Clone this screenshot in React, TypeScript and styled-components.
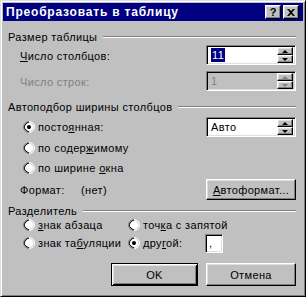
import {FC, ReactNode} from "react";
import styled, {createGlobalStyle, css} from "styled-components";

const Global = createGlobalStyle`
  html, body {
    margin: 0;
    padding: 0;
    background: #c0c0c0;
  }
  * {
    box-sizing: border-box;
  }
`

const raised = css`
  border: 1px solid;
  border-color: #fff #000 #000 #fff;
  box-shadow: inset -1px -1px #808080, inset 1px 1px #dfdfdf;
`

const sunken = css`
  border: 1px solid;
  border-color: #808080 #fff #fff #808080;
  box-shadow: inset 1px 1px #000, inset -1px -1px #dfdfdf;
`

const Window = styled.div`
  width: 306px;
  height: 297px;
  background: #c0c0c0;
  border: 1px solid;
  border-color: #dfdfdf #000 #000 #dfdfdf;
  box-shadow: inset 1px 1px #fff, inset -1px -1px #808080;
  padding: 2px;
  display: flex;
  flex-direction: column;
  font-family: "Liberation Sans", Arial, sans-serif;
  font-size: 11px;
  letter-spacing: 0.35px;
  color: #000;
`

const TitleBar = styled.div`
  height: 18px;
  background: #000080;
  display: flex;
  align-items: center;
  padding: 0 4px 0 3px;
`

const TitleText = styled.div`
  flex: 1;
  color: #fff;
  font-weight: bold;
  font-size: 12px;
  letter-spacing: 0.8px;
`

const CaptionButton = styled.div`
  ${raised};
  width: 16px;
  height: 14px;
  margin-left: 2px;
  background: #c0c0c0;
  display: flex;
  align-items: center;
  justify-content: center;
  font-weight: bold;
  font-size: 11px;
  letter-spacing: 0;
`

const Body = styled.div`
  padding: 9px 7px 0 5px;
  display: flex;
  flex-direction: column;
`

const GroupHead = styled.div<{ $h?: number; $mt?: number }>`
  display: flex;
  align-items: center;
  gap: 6px;
  height: ${({$h}) => $h ?? 14}px;
  margin-top: ${({$mt}) => $mt ?? 0}px;
`

const Rule = styled.div`
  flex: 1;
  border-top: 1px solid #808080;
  border-bottom: 1px solid #fff;
`

const Row = styled.div<{ $h: number; $mt?: number }>`
  display: flex;
  align-items: center;
  height: ${({$h}) => $h}px;
  margin-top: ${({$mt}) => $mt ?? 0}px;
  padding-left: 12px;
`

const Label = styled.span<{ $disabled?: boolean; $w?: number }>`
  ${({$w}) => $w ? `width: ${$w}px;` : "flex: 1;"}
  padding-top: 1px;
  color: ${({$disabled}) => $disabled ? "#808080" : "#000"};
`

const Field = styled.div<{ $disabled?: boolean }>`
  ${sunken};
  width: 90px;
  height: 20px;
  padding: 2px;
  display: flex;
  align-items: center;
  background: ${({$disabled}) => $disabled ? "#c0c0c0" : "#fff"};
  color: ${({$disabled}) => $disabled ? "#808080" : "#000"};
`

const FieldText = styled.div`
  flex: 1;
  padding-left: 2px;
`

const Selected = styled.span`
  background: #000080;
  color: #fff;
  padding: 1px 1px;
`

const SpinCol = styled.div`
  width: 16px;
  height: 16px;
  display: flex;
  flex-direction: column;
`

const SpinButton = styled.div`
  ${raised};
  flex: 1;
  background: #c0c0c0;
  display: flex;
  align-items: center;
  justify-content: center;
`

const Arrow = styled.div<{ $down?: boolean; $disabled?: boolean }>`
  width: 0;
  height: 0;
  border-left: 3px solid transparent;
  border-right: 3px solid transparent;
  ${({$down, $disabled}) => $down
    ? `border-top: 3px solid ${$disabled ? "#808080" : "#000"};`
    : `border-bottom: 3px solid ${$disabled ? "#808080" : "#000"};`}
`

const RadioLine = styled.label`
  display: flex;
  align-items: center;
  gap: 3px;
  white-space: nowrap;
`

const RadioOuter = styled.span`
  width: 12px;
  height: 12px;
  flex: none;
  border-radius: 50%;
  border: 1px solid;
  border-color: #808080 #fff #fff #808080;
  transform: rotate(-45deg);
  display: flex;
`

const RadioInner = styled.span`
  flex: 1;
  border-radius: 50%;
  border: 1px solid;
  border-color: #000 #dfdfdf #dfdfdf #000;
  background: #fff;
  display: flex;
  align-items: center;
  justify-content: center;
`

const Dot = styled.span`
  width: 4px;
  height: 4px;
  border-radius: 50%;
  background: #000;
`

const RadioSlot = styled.div`
  padding-left: 3px;
  flex: 1;
`

const Button = styled.div<{ $w: number; $h: number; $default?: boolean }>`
  width: ${({$w}) => $w}px;
  height: ${({$h}) => $h}px;
  background: #c0c0c0;
  display: flex;
  align-items: center;
  justify-content: center;
  ${({$default}) => $default
    ? css`
      border: 1px solid #000;
      box-shadow: inset 1px 1px #fff, inset -1px -1px #000, inset 2px 2px #dfdfdf, inset -2px -2px #808080;
    `
    : raised}
`

const SepGrid = styled.div`
  display: grid;
  grid-template-columns: 105px 1fr;
  padding-left: 15px;
`

const SepCell = styled.div<{ $h: number }>`
  display: flex;
  align-items: center;
  gap: 6px;
  height: ${({$h}) => $h}px;
`

const SmallField = styled.div`
  ${sunken};
  width: 18px;
  height: 19px;
  background: #fff;
  padding: 2px 3px;
  margin-left: auto;
  margin-right: 73px;
  display: flex;
  align-items: center;
`

const Footer = styled.div`
  display: flex;
  justify-content: flex-end;
  gap: 8px;
  margin-top: 10px;
`

const FormatValue = styled.span`
  flex: 1;
  padding-top: 1px;
`

const Spinner: FC<{ children: ReactNode; disabled?: boolean }> = ({children, disabled}) => (
  <Field $disabled={disabled}>
    <FieldText>{children}</FieldText>
    <SpinCol>
      <SpinButton><Arrow $disabled={disabled}/></SpinButton>
      <SpinButton><Arrow $down $disabled={disabled}/></SpinButton>
    </SpinCol>
  </Field>
)

const Radio: FC<{ checked?: boolean; children: ReactNode }> = ({checked, children}) => (
  <RadioLine>
    <RadioOuter><RadioInner>{checked && <Dot/>}</RadioInner></RadioOuter>
    <span>{children}</span>
  </RadioLine>
)

export default function App() {
  return (
    <Window>
      <Global/>
      <TitleBar>
        <TitleText>Преобразовать в таблицу</TitleText>
        <CaptionButton>?</CaptionButton>
        <CaptionButton>
          <svg width="8" height="7" viewBox="0 0 8 7">
            <path d="M0 0h2l2 2 2-2h2L5 3.5 8 7H6L4 5 2 7H0l3-3.5z" fill="#000"/>
          </svg>
        </CaptionButton>
      </TitleBar>
      <Body>
        <GroupHead>
          <span>Размер таблицы</span>
          <Rule/>
        </GroupHead>
        <Row $h={20} $mt={1}>
          <Label><u>Ч</u>исло столбцов:</Label>
          <Spinner><Selected>11</Selected></Spinner>
        </Row>
        <Row $h={20} $mt={6}>
          <Label $disabled>Число строк:</Label>
          <Spinner disabled>1</Spinner>
        </Row>

        <GroupHead $mt={9}>
          <span>Автоподбор ширины столбцов</span>
          <Rule/>
        </GroupHead>
        <Row $h={20} $mt={3}>
          <RadioSlot><Radio checked>посто<u>я</u>нная:</Radio></RadioSlot>
          <Spinner>Авто</Spinner>
        </Row>
        <Row $h={20} $mt={1}>
          <RadioSlot><Radio>по содер<u>ж</u>имому</Radio></RadioSlot>
        </Row>
        <Row $h={20}>
          <RadioSlot><Radio>по ширине <u>о</u>кна</Radio></RadioSlot>
        </Row>
        <Row $h={21} $mt={1}>
          <Label $w={61}>Формат:</Label>
          <FormatValue>(нет)</FormatValue>
          <Button $w={90} $h={21}><span><u>А</u>втоформат...</span></Button>
        </Row>

        <GroupHead $h={12} $mt={5}>
          <span>Разделитель</span>
          <Rule/>
        </GroupHead>
        <SepGrid>
          <SepCell $h={16}><Radio><u>з</u>нак абзаца</Radio></SepCell>
          <SepCell $h={16}><Radio>точ<u>к</u>а с запятой</Radio></SepCell>
          <SepCell $h={20}><Radio>знак та<u>б</u>уляции</Radio></SepCell>
          <SepCell $h={20}>
            <Radio checked>дру<u>г</u>ой:</Radio>
            <SmallField>,</SmallField>
          </SepCell>
        </SepGrid>

        <Footer>
          <Button $w={87} $h={23} $default>OK</Button>
          <Button $w={90} $h={23}>Отмена</Button>
        </Footer>
      </Body>
    </Window>
  )
}
